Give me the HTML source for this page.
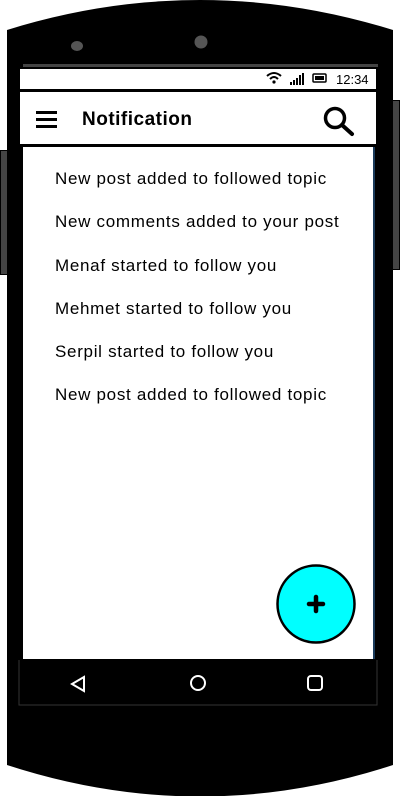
<!DOCTYPE html>
<html><head><style>
*{margin:0;padding:0;box-sizing:border-box}
body{width:400px;height:796px;background:#fff;position:relative;overflow:hidden;font-family:"Liberation Sans",sans-serif}
.a{position:absolute}
.item{position:absolute;left:55px;font-size:17px;color:#000;letter-spacing:0.7px;white-space:nowrap}
</style></head><body>
<div class="a" style="left:0;top:150px;width:8px;height:125px;background:#444;border:1px solid #000"></div>
<div class="a" style="left:392px;top:100px;width:8px;height:170px;background:#444;border:1px solid #000"></div>
<svg class="a" style="left:0;top:0" width="400" height="796">
<path d="M7 30 Q200 -30 393 30 L393 765 Q200 828 7 765 Z" fill="#000"/>
<ellipse cx="77" cy="46" rx="6" ry="5" fill="#555"/>
<circle cx="201" cy="42" r="6.5" fill="#555"/>
<rect x="23" y="64" width="355" height="3" fill="#444"/>
<path d="M19 660 V705 H377 V660" stroke="#333" stroke-width="1" fill="none"/>
</svg>
<div class="a" style="left:20px;top:69px;width:356px;height:20px;background:#fff"></div>
<svg class="a" style="left:264px;top:70px" width="110" height="18">
<path d="M3 6 Q10 0 17 6" stroke="#000" stroke-width="2" fill="none"/>
<path d="M6 9 Q10 5 14 9" stroke="#000" stroke-width="2" fill="none"/>
<circle cx="10" cy="12" r="1.6"/>
<rect x="26" y="12" width="2" height="3"/><rect x="29" y="10" width="2" height="5"/><rect x="32" y="8" width="2" height="7"/><rect x="35" y="5" width="2" height="10"/><rect x="38" y="3" width="2" height="12"/>
<rect x="49" y="4" width="13" height="8" rx="1" fill="none" stroke="#000" stroke-width="1.5"/><rect x="51" y="6" width="9" height="4"/>
<text x="72" y="14" font-size="13" font-family="Liberation Sans">12:34</text>
</svg>
<div class="a" style="left:20px;top:92px;width:356px;height:52px;background:#fff"></div>
<div class="a" style="left:36px;top:111px;width:21px;height:3px;background:#000"></div>
<div class="a" style="left:36px;top:118px;width:21px;height:3px;background:#000"></div>
<div class="a" style="left:36px;top:125px;width:21px;height:3px;background:#000"></div>
<div class="a" style="left:82px;top:109px;font-size:19px;font-weight:bold;letter-spacing:0.5px">Notification</div>
<svg class="a" style="left:322px;top:105px" width="34" height="32"><circle cx="13" cy="13" r="9.5" stroke="#000" stroke-width="3.5" fill="none"/><path d="M20 20 L30 29" stroke="#000" stroke-width="4" stroke-linecap="round"/></svg>
<div class="a" style="left:23px;top:147px;width:350px;height:512px;background:#fff"></div>
<div class="a" style="left:373px;top:147px;width:2px;height:512px;background:#1a3a5a"></div>
<div class="item" style="top:169px">New post added to followed topic</div>
<div class="item" style="top:212px">New comments added to your post</div>
<div class="item" style="top:256px">Menaf started to follow you</div>
<div class="item" style="top:299px">Mehmet started to follow you</div>
<div class="item" style="top:342px">Serpil started to follow you</div>
<div class="item" style="top:385px">New post added to followed topic</div>
<svg class="a" style="left:275px;top:564px" width="82" height="82"><circle cx="41" cy="40" r="38.5" fill="#00ffff" stroke="#000" stroke-width="2.5"/><path d="M41 33 V47 M34 40 H48" stroke="#000" stroke-width="4.5" stroke-linecap="round"/></svg>
<svg class="a" style="left:0;top:660px" width="400" height="50">
<path d="M84 17 L72 24 L84 31 Z" fill="none" stroke="#fff" stroke-width="2"/>
<circle cx="198" cy="23" r="7" fill="none" stroke="#fff" stroke-width="2"/>
<rect x="308" y="16" width="14" height="14" rx="3" fill="none" stroke="#fff" stroke-width="2"/>
</svg>
</body></html>
